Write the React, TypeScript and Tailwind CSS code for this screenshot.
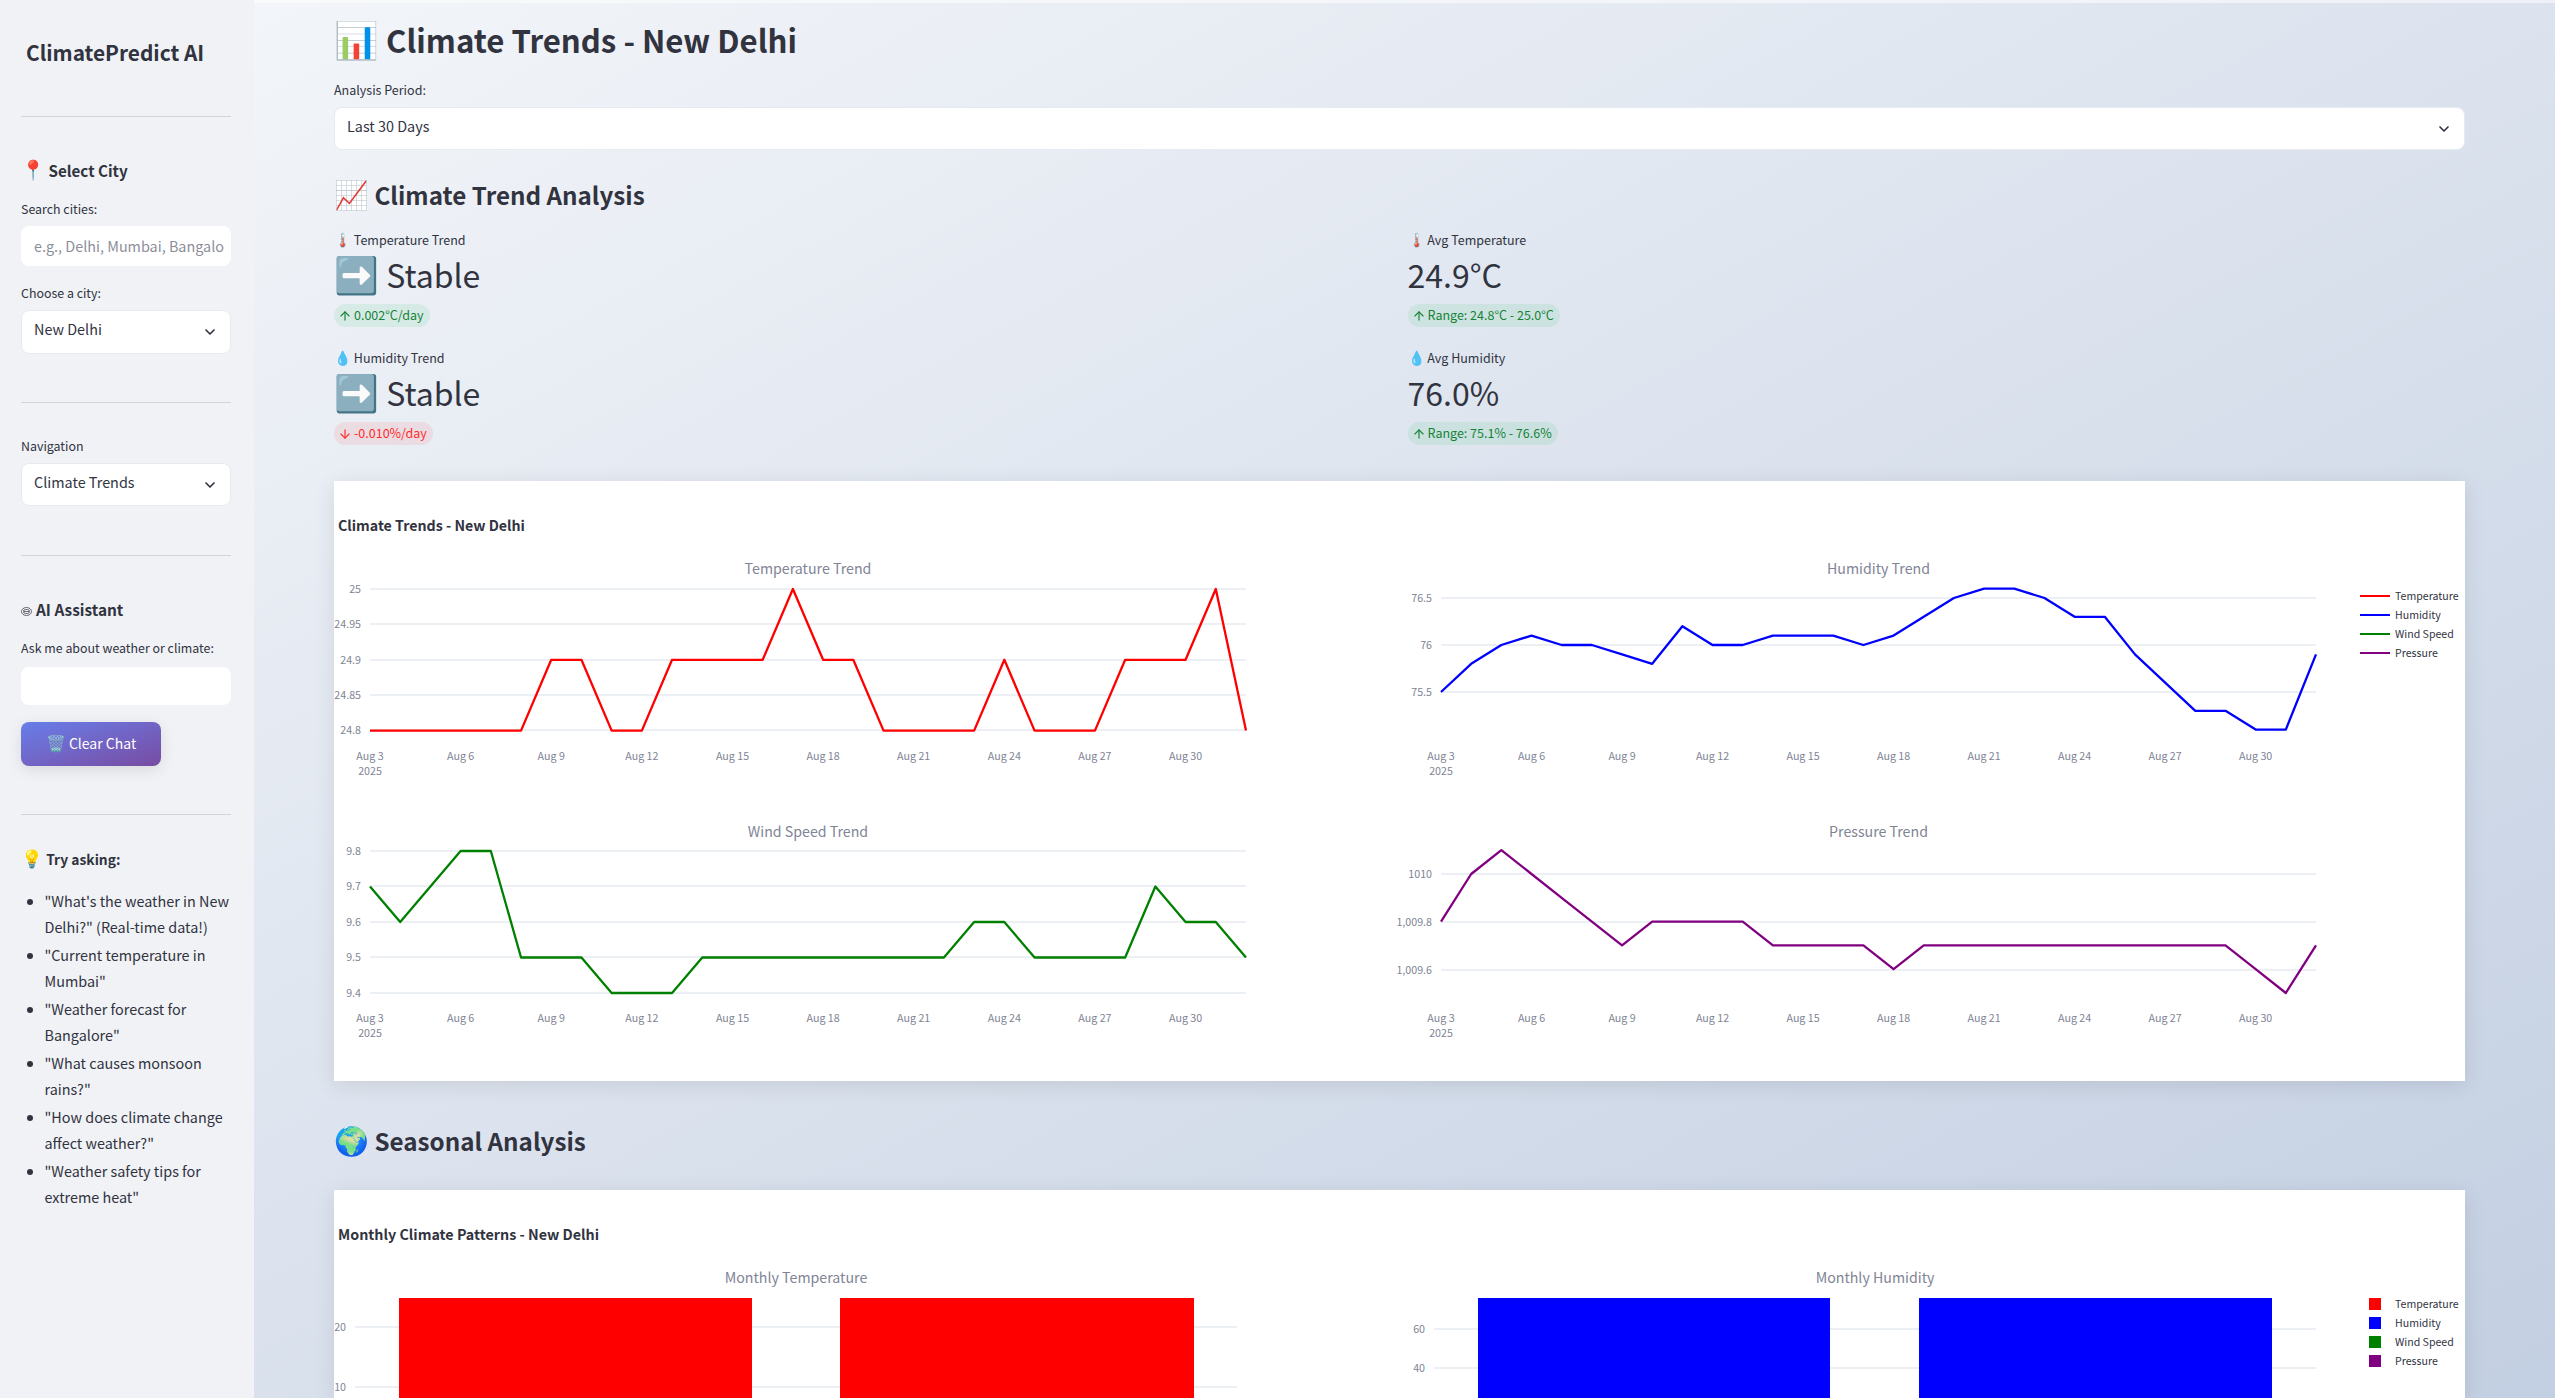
import React from 'react';
import { ArrowUp, ArrowDown, ChevronDown } from 'lucide-react';

const dayTicks = ['Aug 3', 'Aug 6', 'Aug 9', 'Aug 12', 'Aug 15', 'Aug 18', 'Aug 21', 'Aug 24', 'Aug 27', 'Aug 30'];

const temperature = [24.8, 24.8, 24.8, 24.8, 24.8, 24.8, 24.9, 24.9, 24.8, 24.8, 24.9, 24.9, 24.9, 24.9, 25, 24.9, 24.9, 24.8, 24.8, 24.8, 24.8, 24.9, 24.8, 24.8, 24.8, 24.9, 24.9, 24.9, 25, 24.8];
const humidity = [75.5, 75.8, 76, 76.1, 76, 76, 75.9, 75.8, 76.2, 76, 76, 76.1, 76.1, 76.1, 76, 76.1, 76.3, 76.5, 76.6, 76.6, 76.5, 76.3, 76.3, 75.9, 75.6, 75.3, 75.3, 75.1, 75.1, 75.9];
const wind = [9.7, 9.6, 9.7, 9.8, 9.8, 9.5, 9.5, 9.5, 9.4, 9.4, 9.4, 9.5, 9.5, 9.5, 9.5, 9.5, 9.5, 9.5, 9.5, 9.5, 9.6, 9.6, 9.5, 9.5, 9.5, 9.5, 9.7, 9.6, 9.6, 9.5];
const pressure = [1009.8, 1010, 1010.1, 1010, 1009.9, 1009.8, 1009.7, 1009.8, 1009.8, 1009.8, 1009.8, 1009.7, 1009.7, 1009.7, 1009.7, 1009.6, 1009.7, 1009.7, 1009.7, 1009.7, 1009.7, 1009.7, 1009.7, 1009.7, 1009.7, 1009.7, 1009.7, 1009.6, 1009.5, 1009.7];

const legendItems = [
  { name: 'Temperature', color: '#ff0000' },
  { name: 'Humidity', color: '#0000ff' },
  { name: 'Wind Speed', color: '#008000' },
  { name: 'Pressure', color: '#800080' },
];

const tryAsking = [
  '"What\'s the weather in New Delhi?" (Real-time data!)',
  '"Current temperature in Mumbai"',
  '"Weather forecast for Bangalore"',
  '"What causes monsoon rains?"',
  '"How does climate change affect weather?"',
  '"Weather safety tips for extreme heat"',
];

interface LineChartProps {
  title: string;
  left: number;
  right: number;
  titleY: number;
  tickY: number;
  color: string;
  data: number[];
  // value and pixel row of one reference gridline, plus pixels per unit
  refValue: number;
  refY: number;
  perUnit: number;
  grid: { label: string; y: number }[];
}

const LineChart: React.FC<LineChartProps> = ({ title, left, right, titleY, tickY, color, data, refValue, refY, perUnit, grid }) => {
  const step = (right - left) / (data.length - 1);
  const points = data.map((v, i) => `${left + i * step},${refY - (v - refValue) * perUnit}`).join(' ');

  return (
    <g>
      <text x={(left + right) / 2} y={titleY} textAnchor="middle" fontSize={14.2} fill="#808495">{title}</text>
      {grid.map((g) => (
        <g key={g.label}>
          <line x1={left} x2={right} y1={g.y} y2={g.y} stroke="#e6eaf1" strokeWidth={1.5} />
          <text x={left - 9} y={g.y + 4} textAnchor="end" fontSize={10.7} fill="#808495">{g.label}</text>
        </g>
      ))}
      {dayTicks.map((t, i) => (
        <text key={t} x={left + i * 3 * step} y={tickY} textAnchor="middle" fontSize={10.7} fill="#808495">{t}</text>
      ))}
      <text x={left} y={tickY + 15} textAnchor="middle" fontSize={10.7} fill="#808495">2025</text>
      <polyline points={points} fill="none" stroke={color} strokeWidth={2.3} strokeLinejoin="round" />
    </g>
  );
};

const SelectBox: React.FC<{ value: string; className: string }> = ({ value, className }) => (
  <div className={`flex items-center justify-between bg-white rounded-lg border border-[#e6eaf1] pl-[12px] pr-[12px] text-[#31333f] text-[14.4px] ${className}`}>
    <span className="pb-[6px]">{value}</span>
    <ChevronDown size={16} strokeWidth={2.5} />
  </div>
);

const Divider = ({ className }: { className: string }) => <div className={`h-px bg-[#d0d3da] ${className}`} />;

const BotIcon = () => (
  <svg viewBox="0 0 11 9" className="inline-block w-[11px] h-[9px] mr-[4px]" fill="none" stroke="#31333f" strokeWidth={0.7}>
    <ellipse cx={5.5} cy={4.5} rx={5} ry={4} />
    <rect x={2.5} y={2.5} width={6} height={4} rx={2} />
    <path d="M3 4.5h5" />
  </svg>
);

const Sidebar = () => (
  <aside className="w-[254px] shrink-0 h-full bg-[#f0f2f6] pl-[21px] pr-[23px] pt-[36px] text-[#31333f]">
    <div className="pl-[5px] text-[20.85px] leading-[32px] font-semibold">ClimatePredict AI</div>
    <Divider className="mt-[48px]" />

    <div className="mt-[41px] text-[15.2px] leading-[24px] font-semibold"><span className="text-[19.5px] leading-none">📍</span> Select City</div>
    <div className="mt-[17px] text-[12.4px] leading-[20px]">Search cities:</div>
    <div className="mt-[7px] h-[40px] bg-white rounded-lg pl-[13px] flex items-center text-[14.4px] text-[#8c8e98] overflow-hidden whitespace-nowrap">
      e.g., Delhi, Mumbai, Bangalo
    </div>
    <div className="mt-[17px] text-[12.4px] leading-[20px]">Choose a city:</div>
    <SelectBox value="New Delhi" className="mt-[7px] h-[44px]" />
    <Divider className="mt-[48px]" />

    <div className="mt-[33px] text-[12.4px] leading-[20px]">Navigation</div>
    <SelectBox value="Climate Trends" className="mt-[7px] h-[43px]" />
    <Divider className="mt-[49px]" />

    <div className="mt-[41px] text-[15.4px] leading-[24px] font-semibold"><BotIcon />AI Assistant</div>
    <div className="mt-[17px] text-[12.4px] leading-[20px] whitespace-nowrap">Ask me about weather or climate:</div>
    <div className="mt-[9px] h-[38px] bg-white rounded-lg" />
    <button className="mt-[17px] h-[44px] w-[140px] rounded-lg pb-[2px] bg-linear-to-br from-[#667eea] to-[#764ba2] text-white text-[14px] shadow-[0_4px_15px_rgba(0,0,0,0.1)]">
      <span className="text-[16px] leading-none">🗑️</span> Clear Chat
    </button>
    <Divider className="mt-[48px]" />

    <div className="mt-[32px] text-[13.8px] leading-[24px] font-semibold"><span className="text-[17.5px] leading-none">💡</span> Try asking:</div>
    <ul className="mt-[17px] list-disc pl-[23.5px] flex flex-col gap-[2px] text-[14.4px] leading-[26px]">
      {tryAsking.map((q) => <li key={q}>{q}</li>)}
    </ul>
  </aside>
);

const Metric: React.FC<{ icon: string; label: string; value: string; arrow?: boolean; delta: string; down?: boolean }> = ({ icon, label, value, arrow, delta, down }) => (
  <div>
    <div className="text-[12.5px] leading-[20px] text-[#31333f]"><span className="text-[14px] leading-none">{icon}</span> {label}</div>
    <div className="mt-[2px] text-[32px] leading-[44px] text-[#31333f]">
      {arrow && <><span className="text-[36px] leading-none">➡️</span> </>}
      {value}
    </div>
    <div className={`mt-[8px] flex w-fit h-[23px] items-center gap-[2px] rounded-full pl-[4px] pr-[6px] text-[12.5px] ${down ? 'bg-[rgba(255,43,43,0.09)] text-[#ff2b2b]' : 'bg-[rgba(33,195,84,0.1)] text-[#158237]'}`}>
      {down ? <ArrowDown size={14} /> : <ArrowUp size={14} />}
      {delta}
    </div>
  </div>
);

const TrendsFigure = () => (
  <svg viewBox="334 481 2131 600" className="block w-full h-[600px]">
    <text x={338} y={531} fontSize={14.2} fontWeight={700} fill="#31333f">Climate Trends - New Delhi</text>
    <LineChart title="Temperature Trend" left={370} right={1246} titleY={574} tickY={760} color="#ff0000" data={temperature} refValue={25} refY={589} perUnit={708}
      grid={[{ label: '25', y: 589 }, { label: '24.95', y: 624 }, { label: '24.9', y: 660 }, { label: '24.85', y: 695 }, { label: '24.8', y: 730 }]} />
    <LineChart title="Humidity Trend" left={1441} right={2316} titleY={574} tickY={760} color="#0000ff" data={humidity} refValue={76.5} refY={598} perUnit={94}
      grid={[{ label: '76.5', y: 598 }, { label: '76', y: 645 }, { label: '75.5', y: 692 }]} />
    <LineChart title="Wind Speed Trend" left={370} right={1246} titleY={837} tickY={1022} color="#008000" data={wind} refValue={9.8} refY={851} perUnit={355}
      grid={[{ label: '9.8', y: 851 }, { label: '9.7', y: 886 }, { label: '9.6', y: 922 }, { label: '9.5', y: 957 }, { label: '9.4', y: 993 }]} />
    <LineChart title="Pressure Trend" left={1441} right={2316} titleY={837} tickY={1022} color="#800080" data={pressure} refValue={1010} refY={874} perUnit={238}
      grid={[{ label: '1010', y: 874 }, { label: '1,009.8', y: 922 }, { label: '1,009.6', y: 970 }]} />
    {legendItems.map((l, i) => (
      <g key={l.name}>
        <line x1={2360} x2={2390} y1={596 + i * 19} y2={596 + i * 19} stroke={l.color} strokeWidth={2} />
        <text x={2395} y={600 + i * 19} fontSize={10.6} fill="#31333f">{l.name}</text>
      </g>
    ))}
  </svg>
);

const MonthlyFigure = () => (
  <svg viewBox="334 1190 2131 208" className="block w-full h-[208px]">
    <text x={338} y={1240} fontSize={14.3} fontWeight={700} fill="#31333f">Monthly Climate Patterns - New Delhi</text>
    <text x={796} y={1283} textAnchor="middle" fontSize={14.2} fill="#808495">Monthly Temperature</text>
    <text x={1875} y={1283} textAnchor="middle" fontSize={14.2} fill="#808495">Monthly Humidity</text>

    {[{ label: '20', y: 1327 }, { label: '10', y: 1387 }].map((g) => (
      <g key={g.label}>
        <line x1={355} x2={1237} y1={g.y} y2={g.y} stroke="#e6eaf1" strokeWidth={1.5} />
        <text x={346} y={g.y + 4} textAnchor="end" fontSize={10.7} fill="#808495">{g.label}</text>
      </g>
    ))}
    {[{ label: '60', y: 1329 }, { label: '40', y: 1368 }].map((g) => (
      <g key={g.label}>
        <line x1={1434} x2={2316} y1={g.y} y2={g.y} stroke="#e6eaf1" strokeWidth={1.5} />
        <text x={1425} y={g.y + 4} textAnchor="end" fontSize={10.7} fill="#808495">{g.label}</text>
      </g>
    ))}

    <rect x={399} y={1298} width={353} height={100} fill="#ff0000" />
    <rect x={840} y={1298} width={354} height={100} fill="#ff0000" />
    <rect x={1478} y={1298} width={352} height={100} fill="#0000ff" />
    <rect x={1919} y={1298} width={353} height={100} fill="#0000ff" />

    {legendItems.map((l, i) => (
      <g key={l.name}>
        <rect x={2369} y={1298 + i * 19} width={12} height={12} fill={l.color} />
        <text x={2395} y={1308 + i * 19} fontSize={10.6} fill="#31333f">{l.name}</text>
      </g>
    ))}
  </svg>
);

export default function App() {
  return (
    <div className="flex h-[1398px] w-full overflow-hidden font-['Noto_Sans_CJK_SC','Noto_Sans',sans-serif] bg-linear-to-br from-[#f5f7fa] to-[#c3cfe2]">
      <Sidebar />

      <main className="flex-1 min-w-0 border-t-[3px] border-white/50 pl-[80px] pr-[90px] pt-[11px] text-[#31333f]">
        <h1 className="text-[31.2px] leading-[52px] font-semibold whitespace-nowrap"><span className="text-[36px] leading-none">📊</span> Climate Trends - New Delhi</h1>

        <div className="mt-[14px] text-[12.5px] leading-[20px]">Analysis Period:</div>
        <SelectBox value="Last 30 Days" className="mt-[7px] h-[43px]" />

        <h2 className="mt-[25px] text-[24.2px] leading-[40px] font-semibold"><span className="text-[28px] leading-none">📈</span> Climate Trend Analysis</h2>

        <div className="mt-[15px] grid grid-cols-2 gap-x-[16px] gap-y-[21px]">
          <Metric icon="🌡️" label="Temperature Trend" arrow value="Stable" delta="0.002°C/day" />
          <Metric icon="🌡️" label="Avg Temperature" value="24.9°C" delta="Range: 24.8°C - 25.0°C" />
          <Metric icon="💧" label="Humidity Trend" arrow value="Stable" delta="-0.010%/day" down />
          <Metric icon="💧" label="Avg Humidity" value="76.0%" delta="Range: 75.1% - 76.6%" />
        </div>

        <div className="mt-[36px] bg-white shadow-[0_4px_20px_rgba(0,0,0,0.1)]">
          <TrendsFigure />
        </div>

        <h2 className="mt-[40px] text-[24.2px] leading-[40px] font-semibold"><span className="text-[28px] leading-none">🌍</span> Seasonal Analysis</h2>

        <div className="mt-[29px] bg-white shadow-[0_4px_20px_rgba(0,0,0,0.1)]">
          <MonthlyFigure />
        </div>
      </main>
    </div>
  );
}
